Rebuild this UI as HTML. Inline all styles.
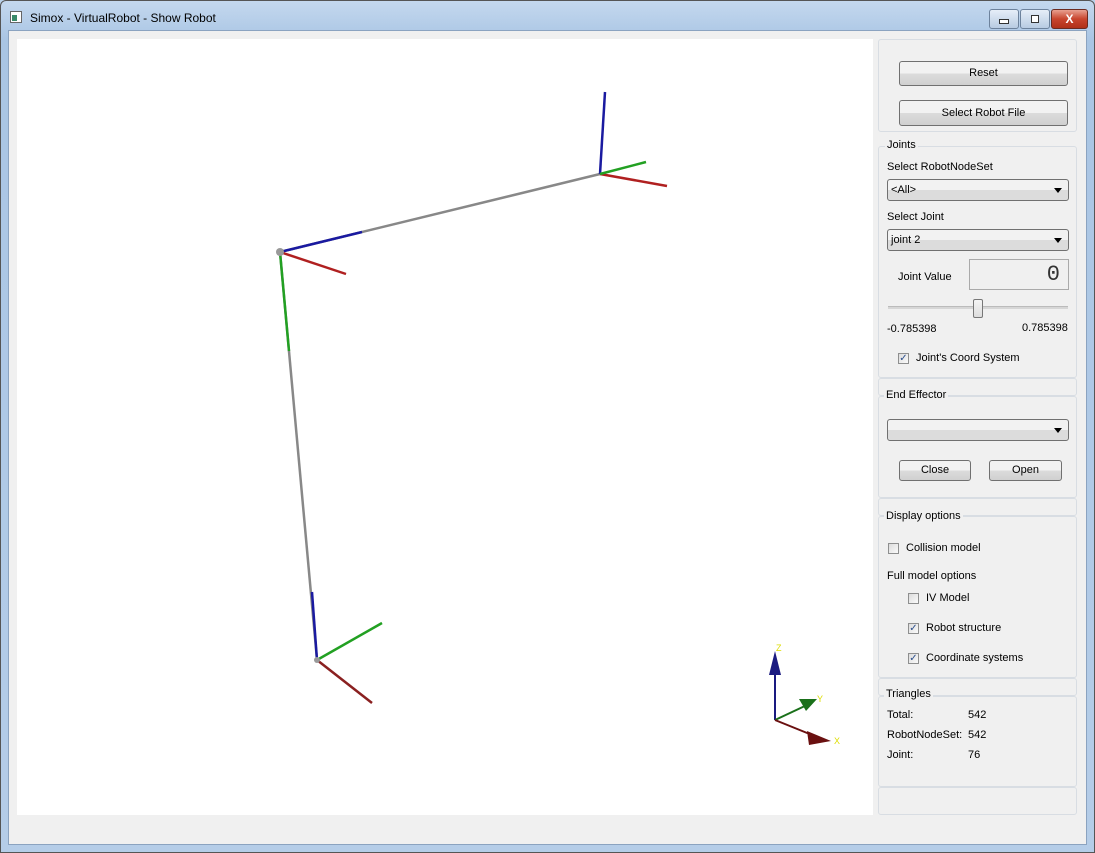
<!DOCTYPE html>
<html><head><style>
body{margin:0;width:1095px;height:853px;overflow:hidden;font-family:"Liberation Sans",sans-serif;font-size:11px;color:#000;position:relative;background:#b9d1ea}
.abs{position:absolute}
.frame{left:0;top:0;width:1093px;height:851px;border:1px solid #555;border-radius:6px 6px 0 0;background:linear-gradient(#c4d8ee,#a9c5e4 40px,#b5cde8);}
.client{left:8px;top:30px;width:1079px;height:815px;background:#f0f0f0;border:1px solid #8ba3c0;box-sizing:border-box}
.btn{position:absolute;border:1px solid #707070;border-radius:3px;background:linear-gradient(#f2f2f2 50%,#dcdcdc 50%,#d0d0d0);text-align:center;box-sizing:border-box;font-size:11px}
.grp{position:absolute;left:878px;width:199px;border:1px solid #d8dde3;border-radius:3px;box-sizing:border-box}
.lbl{position:absolute;font-size:11px;white-space:nowrap}
.combo{position:absolute;left:887px;width:182px;height:22px;border:1px solid #707070;border-radius:3px;background:linear-gradient(#f2f2f2 50%,#dcdcdc 50%);box-sizing:border-box;padding:4px 3px;font-size:11px}
.combo:after{content:"";position:absolute;right:6px;top:8px;border:4px solid transparent;border-top:5px solid #000}
.cb{position:absolute;width:11px;height:11px;border:1px solid #8e8f8f;background:linear-gradient(135deg,#dcdcdc,#fafafa);box-sizing:border-box;font-size:10px;line-height:9px;text-align:center;color:#2c4f8c}
</style></head><body>
<div class="abs frame"></div>
<div class="abs" style="left:10px;top:11px;width:12px;height:12px;background:#fff;border:1px solid #666;box-sizing:border-box"><div style="width:5px;height:6px;background:#3a8a6a;margin:3px 1px"></div></div>
<div class="lbl" style="left:30px;top:11px;font-size:12px">Simox - VirtualRobot - Show Robot</div>
<div class="abs" style="left:989px;top:9px;width:28px;height:18px;border:1px solid #6d829c;border-radius:3px;background:linear-gradient(#e6eef8,#b8cbe2)"><div style="width:8px;height:3px;background:#fff;border:1px solid #333;margin:9px auto 0"></div></div>
<div class="abs" style="left:1020px;top:9px;width:28px;height:18px;border:1px solid #6d829c;border-radius:3px;background:linear-gradient(#e6eef8,#b8cbe2)"><div style="width:6px;height:6px;background:#fff;border:1px solid #333;margin:5px auto 0"></div></div>
<div class="abs" style="left:1051px;top:9px;width:35px;height:18px;border:1px solid #6b2a20;border-radius:3px;background:linear-gradient(#e8a090,#c8452e 50%,#b03018);color:#fff;font-weight:bold;text-align:center;line-height:18px;font-size:12px">X</div>
<div class="abs client"></div>
<svg class="abs" style="left:17px;top:39px" width="856" height="776">
<rect width="856" height="776" fill="#fff"/>
<g stroke-width="2.5" stroke-linecap="butt">
<line x1="263" y1="213" x2="583" y2="135" stroke="#888"/>
<line x1="263" y1="213" x2="300" y2="621" stroke="#888"/>
<line x1="263" y1="213" x2="345" y2="193" stroke="#1a1aa0"/>
<line x1="263" y1="213" x2="329" y2="235" stroke="#b02020"/>
<line x1="263" y1="213" x2="272" y2="312" stroke="#22a022"/>
<line x1="583" y1="135" x2="588" y2="53" stroke="#1a1aa0"/>
<line x1="583" y1="135" x2="650" y2="147" stroke="#b02020"/>
<line x1="583" y1="135" x2="629" y2="123" stroke="#22a022"/>
<line x1="300" y1="621" x2="295" y2="553" stroke="#1a1aa0"/>
<line x1="300" y1="621" x2="355" y2="664" stroke="#8a2020"/>
<line x1="300" y1="621" x2="365" y2="584" stroke="#22a022"/>
</g>
<circle cx="263" cy="213" r="4" fill="#999"/>
<circle cx="300" cy="621" r="3" fill="#999"/>
<g stroke-width="2">
<line x1="758" y1="681" x2="758" y2="620" stroke="#1a1a80"/>
<polygon points="752,636 764,636 758,612" fill="#1a1a80"/>
<line x1="758" y1="681" x2="790" y2="666" stroke="#1a701a"/>
<polygon points="782,660 800,660 789,672" fill="#1a701a"/>
<line x1="758" y1="681" x2="800" y2="698" stroke="#6a1010"/>
<polygon points="790,692 814,702 792,706" fill="#6a1010"/>
</g>
<text x="759" y="612" font-size="9" fill="#dd0">Z</text>
<text x="800" y="663" font-size="9" fill="#dd0">Y</text>
<text x="817" y="705" font-size="9" fill="#dd0">X</text>
</svg>
<div class="grp" style="top:39px;height:93px"></div>
<div class="btn" style="left:899px;top:61px;width:169px;height:25px;line-height:23px">Reset</div>
<div class="btn" style="left:899px;top:100px;width:169px;height:26px;line-height:24px">Select Robot File</div>
<div class="grp" style="top:146px;height:232px"></div>
<div class="lbl" style="left:885px;top:139px;background:#f0f0f0;padding:0 2px">Joints</div>
<div class="lbl" style="left:887px;top:161px">Select RobotNodeSet</div>
<div class="combo" style="top:179px">&lt;All&gt;</div>
<div class="lbl" style="left:887px;top:211px">Select Joint</div>
<div class="combo" style="top:229px">joint 2</div>
<div class="lbl" style="left:898px;top:271px">Joint Value</div>
<div class="abs" style="left:969px;top:259px;width:100px;height:31px;border:1px solid #aaa;box-sizing:border-box;font-family:'Liberation Mono',monospace;font-size:22px;text-align:right;padding-right:8px;line-height:29px;color:#333">0</div>
<div class="abs" style="left:888px;top:306px;width:180px;height:2px;background:#d6d6d6;border-top:1px solid #bbb"></div>
<div class="abs" style="left:973px;top:299px;width:10px;height:19px;border:1px solid #777;border-radius:2px;background:linear-gradient(#f5f5f5,#ddd);box-sizing:border-box"></div>
<div class="lbl" style="left:887px;top:323px">-0.785398</div>
<div class="lbl" style="left:1022px;top:322px">0.785398</div>
<div class="cb" style="left:898px;top:353px">✓</div>
<div class="lbl" style="left:916px;top:352px">Joint's Coord System</div>
<div class="grp" style="top:396px;height:102px"></div>
<div class="grp" style="top:378px;height:18px"></div>
<div class="lbl" style="left:884px;top:389px;background:#f0f0f0;padding:0 2px">End Effector</div>
<div class="combo" style="top:419px"></div>
<div class="btn" style="left:899px;top:460px;width:72px;height:21px;line-height:19px">Close</div>
<div class="btn" style="left:989px;top:460px;width:73px;height:21px;line-height:19px">Open</div>
<div class="grp" style="top:498px;height:18px"></div>
<div class="grp" style="top:516px;height:162px"></div>
<div class="lbl" style="left:884px;top:510px;background:#f0f0f0;padding:0 2px">Display options</div>
<div class="cb" style="left:888px;top:543px"></div>
<div class="lbl" style="left:906px;top:542px">Collision model</div>
<div class="lbl" style="left:887px;top:570px">Full model options</div>
<div class="cb" style="left:908px;top:593px"></div>
<div class="lbl" style="left:926px;top:592px">IV Model</div>
<div class="cb" style="left:908px;top:623px">✓</div>
<div class="lbl" style="left:926px;top:622px">Robot structure</div>
<div class="cb" style="left:908px;top:653px">✓</div>
<div class="lbl" style="left:926px;top:652px">Coordinate systems</div>
<div class="grp" style="top:678px;height:18px"></div>
<div class="grp" style="top:696px;height:91px"></div>
<div class="lbl" style="left:884px;top:688px;background:#f0f0f0;padding:0 2px">Triangles</div>
<div class="lbl" style="left:887px;top:709px">Total:</div><div class="lbl" style="left:968px;top:709px">542</div>
<div class="lbl" style="left:887px;top:729px">RobotNodeSet:</div><div class="lbl" style="left:968px;top:729px">542</div>
<div class="lbl" style="left:887px;top:749px">Joint:</div><div class="lbl" style="left:968px;top:749px">76</div>
<div class="grp" style="top:787px;height:28px"></div>
</body></html>
